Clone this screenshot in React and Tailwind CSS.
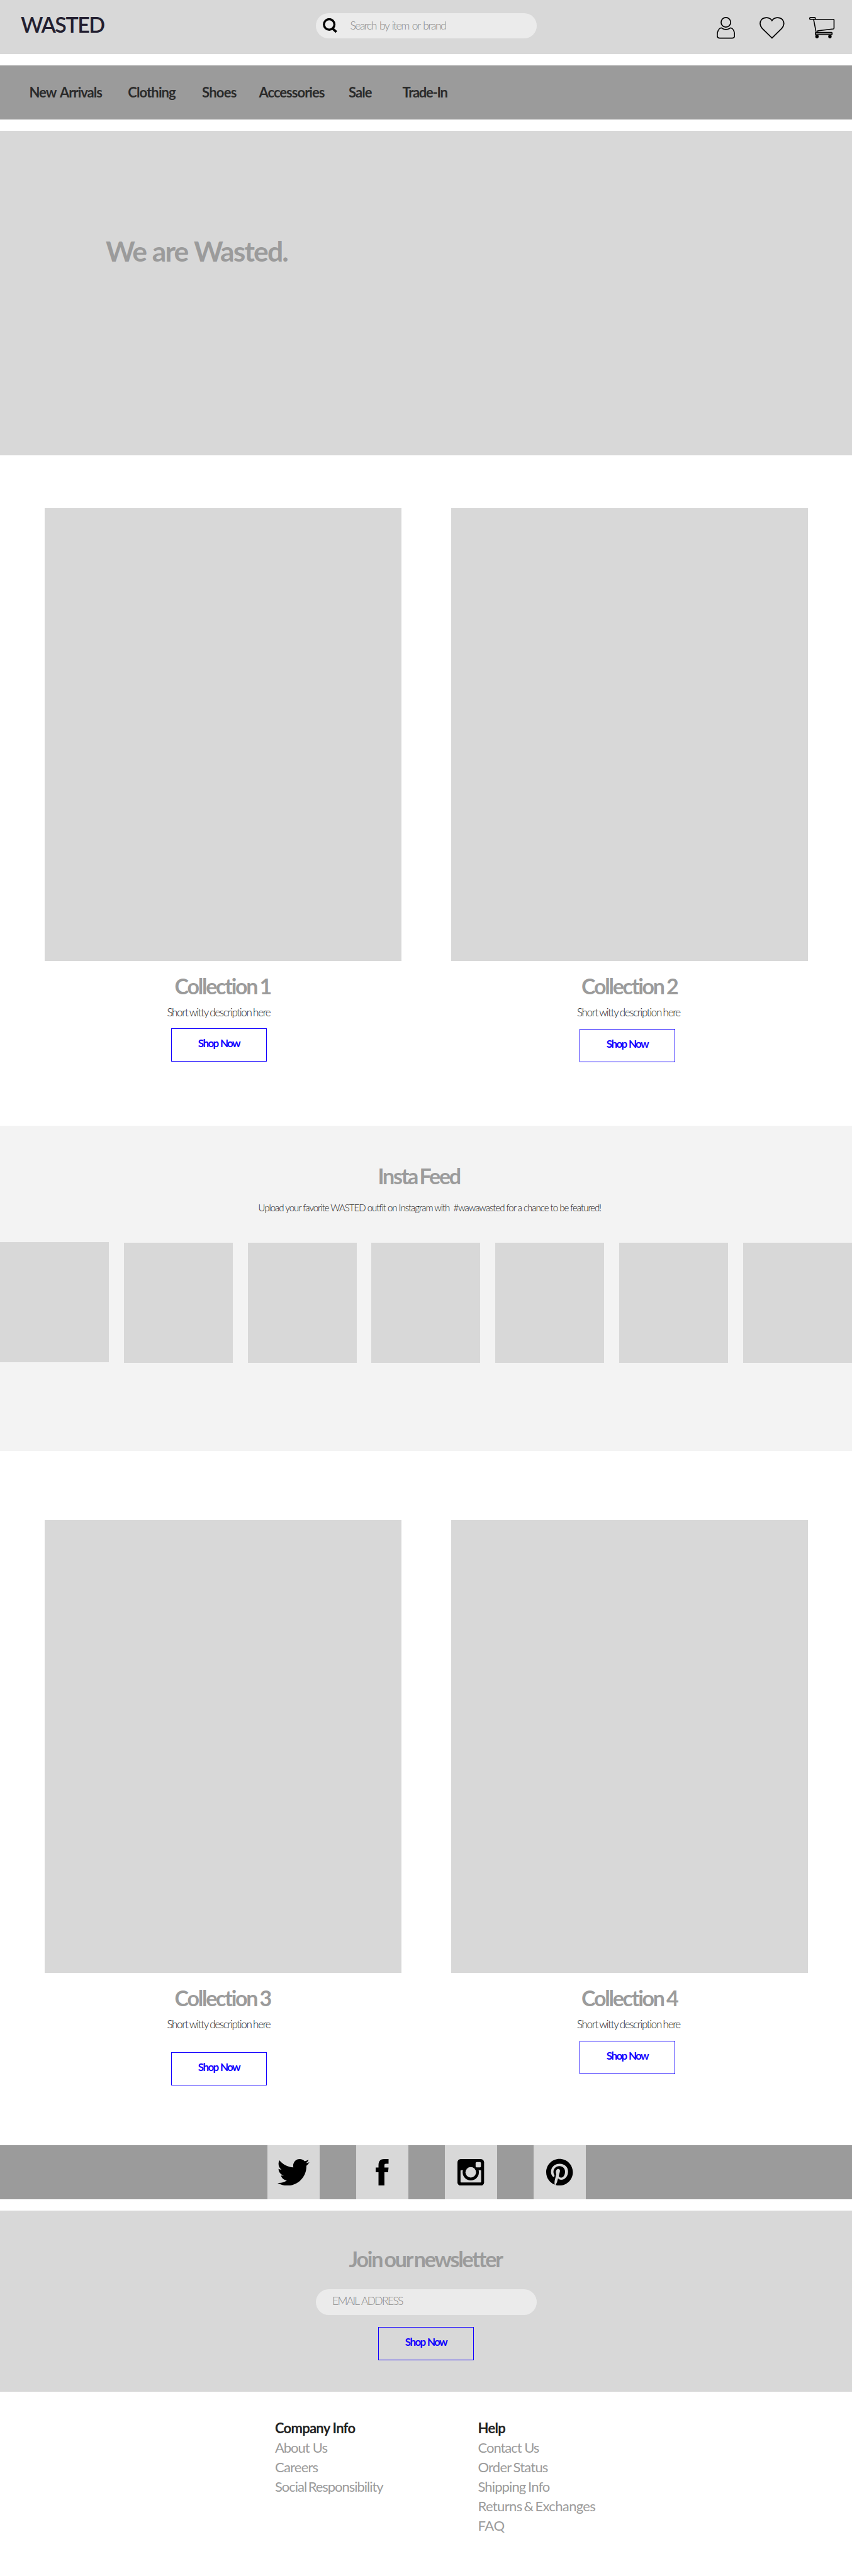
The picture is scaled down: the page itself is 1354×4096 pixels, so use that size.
import React from 'react';
import { FaPinterest } from 'react-icons/fa';

function SearchIcon() {
  return (
    <svg className="h-[23.5px] w-[23.5px]" viewBox="0 0 25 25" fill="none" stroke="#000">
      <circle cx="10.8" cy="10.5" r="8.9" strokeWidth="3.6" />
      <path d="M16.8 17.6 L23 23.4" strokeWidth="4" />
    </svg>
  );
}

function UserIcon() {
  return (
    <svg className="h-[34.5px] w-[29.4px]" viewBox="0 0 31.3 36.7" fill="none" stroke="#000" strokeWidth="1.8">
      <circle cx="15.5" cy="9" r="8.1" />
      <path d="M7.5 18.4C10 19.5 11.5 21.2 15.6 21.2C19.7 21.2 21.2 19.5 23.7 18.4C28 19.5 30.3 25 30.3 31C30.3 34.5 28.8 35.7 26 35.7H5.2C2.4 35.7 .9 34.5 .9 31C.9 25 3.2 19.5 7.5 18.4Z" />
    </svg>
  );
}

function HeartIcon() {
  return (
    <svg className="h-[34.5px] w-[39.8px]" viewBox="0 0 42.3 36.7" fill="none" stroke="#000" strokeWidth="1.8">
      <path d="M21.1 35.6L4.5 19.3C.2 14.6 -.1 8.4 3.6 4.2C8.3 -.4 17.2 .1 21.1 6.2C25 .1 33.9 -.4 38.6 4.2C42.3 8.4 42 14.6 37.7 19.3Z" />
    </svg>
  );
}

function CartIcon() {
  return (
    <svg className="h-[34px] w-[40.2px]" viewBox="0 0 42.7 36.1" fill="none" stroke="#000" strokeWidth="1.7">
      <path d="M2 .9H9.3Q10.3 .9 10.3 2V3.9H41Q41.9 3.9 41.9 4.8V18.8Q41.9 19.9 40.8 20.1L14.4 23.2V25.8" />
      <path d="M2 .9Q.8 .9 .8 2.4Q.8 4 2 4H7.4L11.7 25.8" />
      <path d="M10.3 3.9H7.4" />
      <rect x="10.4" y="26.2" width="28.2" height="3.8" rx="1" fill="#8f8f8f" />
      <ellipse cx="13.1" cy="33" rx="2.9" ry="3" fill="#000" stroke="none" />
      <ellipse cx="35" cy="33" rx="2.9" ry="3" fill="#000" stroke="none" />
    </svg>
  );
}

function TwitterIcon() {
  return (
    <svg className="h-[42.3px] w-[50.8px]" viewBox="0 0 54 45">
      <path d="M37.4 0C41 0 43.8 1.5 45.8 3.6C48.2 3.1 50.5 2.2 52.6 1C51.8 3.4 50.2 5.3 48.2 6.9C50.2 6.7 52.2 6.2 54 5.4C52.6 7.8 50.9 9.8 48.8 11.4C49.6 28 36.5 45 17 45C10.8 45 5 43.3 0 40.4C5.8 41 11.5 39.4 16 35.9C11.3 35.8 7.2 32.6 5.8 27.8C7.4 28.1 9.2 28.1 10.7 27.6C5.4 26.5 1.7 21.9 1.7 16.4C3.2 17.2 5 17.8 6.7 17.8C1.8 14.4 .2 7.6 3.3 2.1C9 9.2 17.6 13.8 26.8 14.2C25.1 6.6 30.6 0 37.4 0Z" />
    </svg>
  );
}

function FacebookIcon() {
  return (
    <svg className="h-[42.3px] w-[20.5px]" viewBox="0 0 21.8 45">
      <path d="M4.8 45V22.3H0V14.3H4.8V10C4.8 3.2 8.5 0 14.5 0H21.8V8H17.3C15.3 8 14.8 9 14.8 10.5V14.3H21.8L21 22.3H14.8V45Z" />
    </svg>
  );
}

function InstagramIcon() {
  return (
    <svg className="h-[42.3px] w-[42.3px]" viewBox="0 0 45 45">
      <rect width="45" height="45" rx="5.5" />
      <rect x="5.2" y="19" width="34.8" height="20.6" rx="1" fill="#d8d8d8" />
      <circle cx="22.5" cy="22.5" r="13.7" />
      <circle cx="22.5" cy="22.5" r="8.9" fill="#d8d8d8" />
      <rect x="30.7" y="5" width="9" height="9.2" rx="2" fill="#d8d8d8" />
    </svg>
  );
}

function ShopButton({ className }) {
  return (
    <button
      className={`flex h-[53px] w-[152px] justify-center border border-[#1200ff] pt-[11px] text-[17px] leading-[24px] font-bold tracking-[-1.62px] [word-spacing:0.8px] text-[#1200ff] ${className}`}
    >
      Shop Now
    </button>
  );
}

function Collection({ title, titleClass, textClass, buttonClass }) {
  return (
    <article className="w-[567px]">
      <div className="h-[720px] bg-[#d8d8d8]" />
      <h2 className={`mt-[20px] text-[34px] leading-[40px] font-bold tracking-[-2.23px] [word-spacing:-1.8px] text-[#9b9b9b] ${titleClass}`}>{title}</h2>
      <p className={`mt-[10px] text-[17px] leading-[24px] font-light tracking-[-1.34px] [word-spacing:-0.6px] text-[#222] ${textClass}`}>
        Short witty description here
      </p>
      <ShopButton className={buttonClass} />
    </article>
  );
}

const HEADING = 'text-[34px] leading-[40px] font-bold text-[#9b9b9b] whitespace-nowrap';

const companyLinks = [
  ['About Us', 'tracking-[-1.05px] [word-spacing:0.7px]'],
  ['Careers', 'tracking-[-0.79px]'],
  ['Social Responsibility', 'tracking-[-1.03px] [word-spacing:-2px]'],
];

const helpLinks = [
  ['Contact Us', 'tracking-[-1.03px]'],
  ['Order Status', 'tracking-[-0.8px] [word-spacing:-1.2px]'],
  ['Shipping Info', 'tracking-[-0.89px] [word-spacing:-1px]'],
  ['Returns & Exchanges', 'tracking-[-0.65px] [word-spacing:-2px]'],
  ['FAQ', 'tracking-[-0.33px]'],
];

function FooterColumn({ title, titleClass, links, className }) {
  return (
    <div className={`text-[22px] leading-[31.13px] whitespace-nowrap ${className}`}>
      <h3 className={`font-bold text-[#222] ${titleClass}`}>{title}</h3>
      <ul className="text-[#9b9b9b]">
        {links.map(([label, tracking]) => (
          <li key={label} className={tracking}>{label}</li>
        ))}
      </ul>
    </div>
  );
}

export default function App() {
  return (
    <div className="flex h-[4096px] w-[1354px] flex-col overflow-hidden bg-white font-['Lato',sans-serif]">
      <header className="flex h-[86px] shrink-0 items-start bg-[#d8d8d8]">
        <div className="mt-[19px] ml-[33px] w-[469px] text-[34px] leading-[40px] font-semibold tracking-[-1.47px] text-[#231f30]">
          WASTED
        </div>
        <div className="mt-[21px] flex h-10 w-[351px] items-start rounded-full bg-[#ebebeb] pt-[8px] pl-[11px]">
          <SearchIcon />
          <span className="ml-[20px] text-[17.5px] leading-[24px] font-light tracking-[-1.5px] [word-spacing:1.74px] text-[#888]">
            Search by item or brand
          </span>
        </div>
        <div className="mt-[27px] ml-[286px] flex">
          <UserIcon />
          <div className="ml-[39px]"><HeartIcon /></div>
          <div className="ml-[39.3px]"><CartIcon /></div>
        </div>
      </header>

      <nav className="mt-[18px] flex h-[86px] shrink-0 bg-[#9b9b9b] pt-[31px] pl-[46.5px] text-[22px] leading-[24px] font-bold whitespace-nowrap text-[#2b2b2b]">
        <a className="w-[156.8px] tracking-[-1px] [word-spacing:2.5px]">New Arrivals</a>
        <a className="w-[117.7px] tracking-[-0.89px]">Clothing</a>
        <a className="w-[90.5px] tracking-[-0.73px]">Shoes</a>
        <a className="w-[142.6px] tracking-[-0.98px]">Accessories</a>
        <a className="w-[85.4px] tracking-[-0.99px]">Sale</a>
        <a className="tracking-[-1.27px]">Trade-In</a>
      </nav>

      <section className="mt-[18px] h-[516px] shrink-0 bg-[#d8d8d8] pt-[165px] pl-[168px]">
        <h1 className="text-[44.5px] leading-[52px] font-bold tracking-[-1.85px] [word-spacing:0.7px] text-[#9b9b9b]">We are Wasted.</h1>
      </section>

      <section className="flex h-[1066px] shrink-0 gap-[79px] pt-[84px] pl-[71px]">
        <Collection title="Collection 1" titleClass="pl-[206.5px]" textClass="pl-[194.5px]" buttonClass="mt-[13px] ml-[201px]" />
        <Collection title="Collection 2" titleClass="pl-[207px]" textClass="pl-[200px]" buttonClass="mt-[14px] ml-[204px]" />
      </section>

      <section className="h-[517px] shrink-0 bg-[#f3f3f3] pt-[60px]">
        <h2 className={`${HEADING} pl-[600.5px] tracking-[-2.27px] [word-spacing:-2.4px]`}>Insta Feed</h2>
        <p className="mt-[18px] pl-[410.5px] text-[15px] leading-[24px] font-light tracking-[-1.013px] whitespace-nowrap text-[#222]">
          Upload your favorite WASTED outfit on Instagram with{'\u00a0'} #wawawasted for a chance to be featured!
        </p>
        <div className="mt-[43px] flex justify-between">
          <div className="h-[191px] w-[173px] bg-[#d8d8d8]" />
          {[2, 3, 4, 5, 6, 7].map((n) => (
            <div key={n} className="mt-px h-[191px] w-[173px] bg-[#d8d8d8]" />
          ))}
        </div>
      </section>

      <section className="flex h-[1104px] shrink-0 gap-[79px] pt-[110px] pl-[71px]">
        <Collection title="Collection 3" titleClass="pl-[206.5px]" textClass="pl-[194.5px]" buttonClass="mt-[32px] ml-[201px]" />
        <Collection title="Collection 4" titleClass="pl-[207px]" textClass="pl-[200px]" buttonClass="mt-[14px] ml-[204px]" />
      </section>

      <section className="flex h-[86px] shrink-0 gap-[58px] bg-[#9b9b9b] pl-[425px]">
        <a className="flex w-[83px] items-center justify-center bg-[#d8d8d8]"><TwitterIcon /></a>
        <a className="flex w-[83px] items-center justify-center bg-[#d8d8d8]"><FacebookIcon /></a>
        <a className="flex w-[83px] items-center justify-center bg-[#d8d8d8]"><InstagramIcon /></a>
        <a className="flex w-[83px] items-center justify-center bg-[#d8d8d8]"><FaPinterest className="h-[43.8px] w-[42.4px]" /></a>
      </section>

      <section className="mt-[18px] h-[288px] shrink-0 bg-[#d8d8d8] pt-[57px]">
        <h2 className={`${HEADING} pl-[554.5px] tracking-[-2.16px] [word-spacing:-2.97px]`}>Join our newsletter</h2>
        <div className="mt-[28px] ml-[502px] h-[41px] w-[351px] rounded-full bg-[#ebebeb] pt-[7px] pl-[26px] text-[17.5px] leading-[24px] font-light tracking-[-1.68px] [word-spacing:1.43px] text-[#888]">
          EMAIL ADDRESS
        </div>
        <ShopButton className="mt-[19px] ml-[601px]" />
      </section>

      <footer className="flex pt-[41.5px]">
        <FooterColumn title="Company Info" titleClass="tracking-[-0.75px]" links={companyLinks} className="ml-[437px] w-[322.5px]" />
        <FooterColumn title="Help" titleClass="tracking-[-0.68px]" links={helpLinks} className="" />
      </footer>
    </div>
  );
}
